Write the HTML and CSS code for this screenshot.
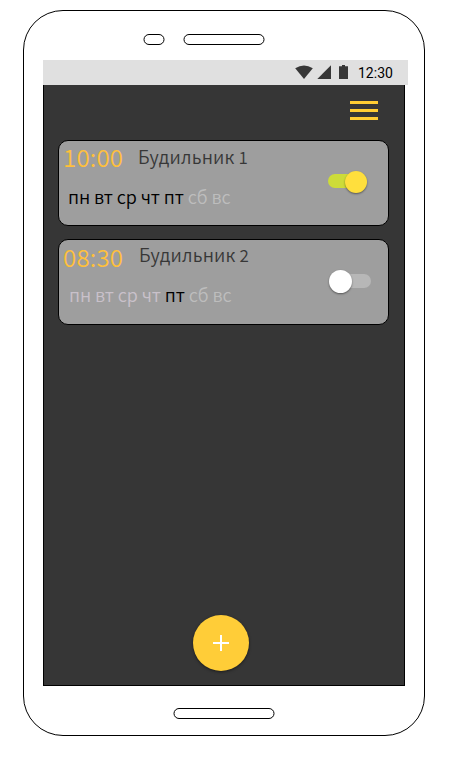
FILE: index.html
```html
<!DOCTYPE html>
<html lang="ru">
<head>
<meta charset="utf-8">
<title>Будильник</title>
<link rel="stylesheet" href="styles.css">
</head>
<body>
<div class="phone">
  <div class="phone-top">
    <svg class="slot" width="22" height="11"><rect x="1" y="0.5" width="20" height="10" rx="5"/></svg>
    <svg class="slot" width="82" height="11"><rect x="1" y="0.5" width="80" height="10" rx="5"/></svg>
  </div>
  <div class="status-bar">
    <svg class="status-icons" width="56" height="16" viewBox="0 0 56 16">
      <path d="M0.2 3.3Q9 -2.3 17.8 3.3L9 14Z"/>
      <path d="M22.300 14H36V0.300Z"/>
      <path d="M44 1.300h3V0h3v1.300h3V14h-9Z"/>
    </svg>
    <span class="clock">12:30</span>
  </div>
  <main class="screen">
    <header class="toolbar">
      <button class="menu" aria-label="Меню"><span></span><span></span><span></span></button>
    </header>
    <section class="alarms">
      <article class="alarm">
        <div class="info">
          <div class="heading"><span class="time">10:00</span><span class="name">Будильник <span class="number">1</span></span></div>
          <div class="days"><b>пн вт ср чт пт</b> сб вс</div>
        </div>
        <span class="switch on"><i></i></span>
      </article>
      <article class="alarm second">
        <div class="info">
          <div class="heading"><span class="time">08:30</span><span class="name">Будильник <span class="number">2</span></span></div>
          <div class="days"><em>пн вт ср чт</em> <b>пт</b> сб вс</div>
        </div>
        <span class="switch"><i></i></span>
      </article>
    </section>
    <button class="add" aria-label="Добавить">
      <svg width="16" height="16" viewBox="0 0 16 16"><path d="M8 0V16M0 8H16"/></svg>
    </button>
  </main>
  <svg class="slot home" width="102" height="11"><rect x="1" y="0.5" width="100" height="10" rx="5"/></svg>
</div>
</body>
</html>
```
FILE: styles.css
```css
* { box-sizing: border-box; }
body {
  margin: 0;
  padding: 10px 0 0 23px;
  background: #fff;
  font-family: "Noto Sans CJK SC", "Noto Sans", sans-serif;
}
button { border: 0; padding: 0; background: none; }
.phone {
  width: 402px;
  height: 726px;
  border: 1px solid #000;
  border-radius: 40px;
  padding-left: 19px;
}
.phone-top {
  height: 49px;
  display: flex;
  gap: 18px;
  padding: 23px 0 0 100px;
}
.slot { display: block; fill: #fff; stroke: #000; }
.status-bar {
  width: 365px;
  height: 25px;
  background: #e0e0e0;
  display: flex;
  align-items: flex-start;
  padding: 5px 0 0 252px;
}
.status-icons { fill: #373737; flex: none; }
.clock {
  margin-left: 7px;
  font: 14px/16px Roboto, sans-serif;
  color: #000;
}
.screen {
  width: 362px;
  height: 601px;
  border: 1px solid #000;
  border-top: 0;
  background: #363636;
  display: flex;
  flex-direction: column;
}
.toolbar {
  height: 55px;
  display: flex;
  justify-content: flex-end;
  align-items: flex-start;
  padding: 16px 26px 0 0;
}
.menu {
  width: 28px;
  display: flex;
  flex-direction: column;
  gap: 5px;
}
.menu span { height: 3px; background: #fc3; }
.alarms {
  display: flex;
  flex-direction: column;
  gap: 13px;
  padding-left: 14px;
}
.alarm {
  width: 331px;
  height: 86px;
  border: 1px solid #000;
  border-radius: 10px;
  background: #9e9e9e;
  display: flex;
  justify-content: space-between;
  font-weight: 350;
}
.heading { display: flex; height: 39px; }
.time {
  width: 75px;
  margin-left: 4px;
  font-size: 24px;
  line-height: 32px;
  letter-spacing: .2px;
  color: #ffc03b;
}
.name {
  font-size: 18px;
  line-height: 31px;
  letter-spacing: .2px;
  color: #373737;
  white-space: nowrap;
  word-spacing: -.3px;
}
.number { font-size: 17px; line-height: 1; }
.days {
  padding-left: 9px;
  font-size: 18px;
  line-height: 33px;
  color: #bdbdbd;
  white-space: nowrap;
  word-spacing: -.2px;
}
.days b { font-weight: inherit; color: #000; }
.days em { font-style: normal; color: #c9c1ca; }
.second .time { line-height: 34px; }
.second .name { line-height: 29px; padding-left: 1px; }
.second .days { line-height: 31px; padding-left: 10px; }
.switch {
  width: 42px;
  height: 14px;
  margin: 34px 17px 0 0;
  border-radius: 7px;
  background: #b7b7b7;
  display: flex;
  align-items: center;
}
.switch i {
  width: 23px;
  height: 23px;
  flex: none;
  border-radius: 50%;
  background: #fff;
  box-shadow: 0 1px 2px rgba(0, 0, 0, .45);
}
.switch.on {
  width: 39px;
  margin-right: 21px;
  margin-top: 33px;
  background: #cddc39;
  justify-content: flex-end;
}
.switch.on i { width: 22px; height: 22px; margin: 1px -.4px 0 0; background: #ffdf3d; }
.add {
  width: 56px;
  height: 56px;
  margin: auto 0 14px 149px;
  border-radius: 50%;
  background: #ffcd38;
  box-shadow: 0 1px 3px rgba(0, 0, 0, .5);
  display: flex;
  align-items: center;
  justify-content: center;
}
.add path { stroke: #fff; stroke-width: 2; }
.home { margin: 22px 0 0 130px; }
```
